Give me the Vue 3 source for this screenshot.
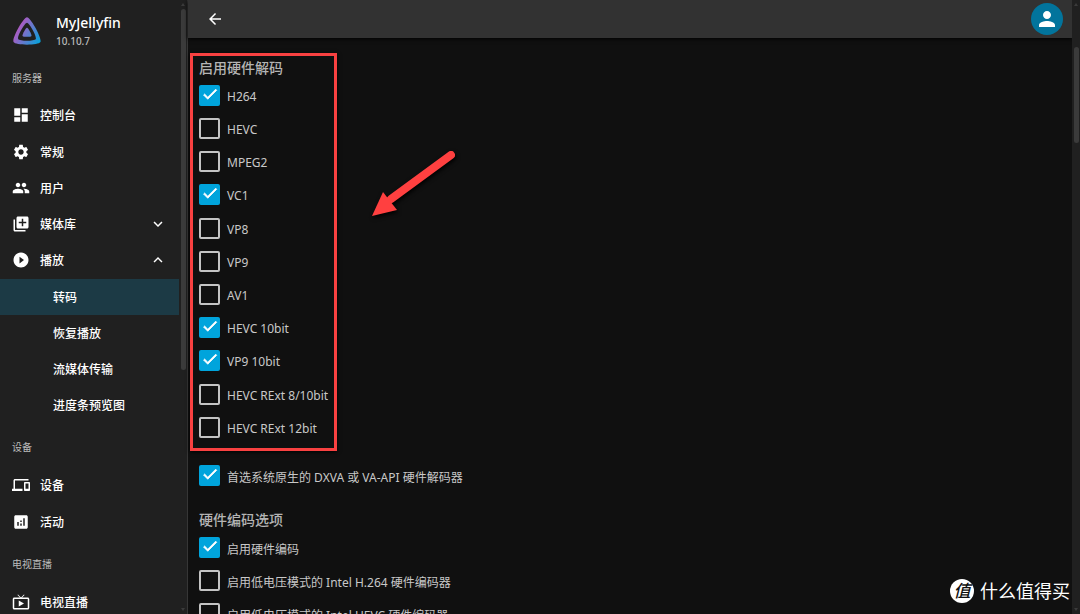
<script setup>
import { reactive } from 'vue'

const paths = {
  dashboard: 'M3 13h8V3H3v10zm0 8h8v-6H3v6zm10 0h8V11h-8v10zm0-18v6h8V3h-8z',
  settings:
    'M19.14 12.94c.04-.3.06-.61.06-.94 0-.32-.02-.64-.07-.94l2.03-1.58c.18-.14.23-.41.12-.61l-1.92-3.32c-.12-.22-.37-.29-.59-.22l-2.39.96c-.5-.38-1.03-.7-1.62-.94l-.36-2.54c-.04-.24-.24-.41-.48-.41h-3.84c-.24 0-.43.17-.47.41l-.36 2.54c-.59.24-1.13.57-1.62.94l-2.39-.96c-.22-.08-.47 0-.59.22L2.74 8.87c-.12.21-.08.47.12.61l2.03 1.58c-.05.3-.09.63-.09.94s.02.64.07.94l-2.03 1.58c-.18.14-.23.41-.12.61l1.92 3.32c.12.22.37.29.59.22l2.39-.96c.5.38 1.03.7 1.62.94l.36 2.54c.05.24.24.41.48.41h3.84c.24 0 .44-.17.47-.41l.36-2.54c.59-.24 1.13-.56 1.62-.94l2.39.96c.22.08.47 0 .59-.22l1.92-3.32c.12-.22.07-.47-.12-.61l-2.01-1.58zM12 15.6c-1.98 0-3.6-1.62-3.6-3.6s1.62-3.6 3.6-3.6 3.6 1.62 3.6 3.6-1.62 3.6-3.6 3.6z',
  people:
    'M16 11c1.66 0 2.99-1.34 2.99-3S17.66 5 16 5s-3 1.34-3 3 1.34 3 3 3zm-8 0c1.66 0 2.99-1.34 2.99-3S9.66 5 8 5 5 6.34 5 8s1.34 3 3 3zm0 2c-2.33 0-7 1.17-7 3.5V19h14v-2.5c0-2.33-4.67-3.5-7-3.5zm8 0c-.29 0-.62.02-.97.05 1.16.84 1.97 1.97 1.97 3.45V19h6v-2.5c0-2.33-4.67-3.5-7-3.5z',
  library:
    'M4 6H2v14c0 1.1.9 2 2 2h14v-2H4V6zm16-4H8c-1.1 0-2 .9-2 2v12c0 1.1.9 2 2 2h12c1.1 0 2-.9 2-2V4c0-1.1-.9-2-2-2zm-1 9h-4v4h-2v-4H9V9h4V5h2v4h4v2z',
  play: 'M12 2C6.48 2 2 6.48 2 12s4.48 10 10 10 10-4.48 10-10S17.52 2 12 2zm-2 14.5v-9l6 4.5-6 4.5z',
  devices:
    'M4 6h18V4H4c-1.1 0-2 .9-2 2v11H0v3h14v-3H4V6zm19 2h-6c-.55 0-1 .45-1 1v10c0 .55.45 1 1 1h6c.55 0 1-.45 1-1V9c0-.55-.45-1-1-1zm-1 9h-4v-7h4v7z',
  activity:
    'M19 3H5c-1.1 0-2 .9-2 2v14c0 1.1.9 2 2 2h14c1.1 0 2-.9 2-2V5c0-1.1-.9-2-2-2zM9 17H7v-5h2v5zm4 0h-2v-3h2v3zm0-5h-2v-2h2v2zm4 5h-2V7h2v10z',
  tv: 'M21 6h-7.59l3.29-3.29L16 2l-4 4-4-4-.7.71L10.59 6H3c-1.1 0-2 .89-2 2v12c0 1.1.9 2 2 2h18c1.1 0 2-.9 2-2V8c0-1.11-.9-2-2-2zm0 14H3V8h18v12zM9 10v8l7-4z',
}

const sections = [
  {
    title: '服务器',
    items: [
      { label: '控制台', icon: 'dashboard' },
      { label: '常规', icon: 'settings' },
      { label: '用户', icon: 'people' },
      { label: '媒体库', icon: 'library', expand: 'down' },
      {
        label: '播放',
        icon: 'play',
        expand: 'up',
        children: [
          { label: '转码', active: true },
          { label: '恢复播放' },
          { label: '流媒体传输' },
          { label: '进度条预览图' },
        ],
      },
    ],
  },
  {
    title: '设备',
    items: [
      { label: '设备', icon: 'devices' },
      { label: '活动', icon: 'activity' },
    ],
  },
  { title: '电视直播', items: [{ label: '电视直播', icon: 'tv' }] },
]

const groups = reactive([
  {
    title: '启用硬件解码',
    kind: 'marked',
    options: [
      { label: 'H264', on: true },
      { label: 'HEVC', on: false },
      { label: 'MPEG2', on: false },
      { label: 'VC1', on: true },
      { label: 'VP8', on: false },
      { label: 'VP9', on: false },
      { label: 'AV1', on: false },
      { label: 'HEVC 10bit', on: true },
      { label: 'VP9 10bit', on: true },
      { label: 'HEVC RExt 8/10bit', on: false },
      { label: 'HEVC RExt 12bit', on: false },
    ],
  },
  {
    title: '',
    kind: 'native',
    options: [{ label: '首选系统原生的 DXVA 或 VA-API 硬件解码器', on: true }],
  },
  {
    title: '硬件编码选项',
    kind: 'encode',
    options: [
      { label: '启用硬件编码', on: true },
      { label: '启用低电压模式的 Intel H.264 硬件编码器', on: false },
      { label: '启用低电压模式的 Intel HEVC 硬件编码器', on: false },
    ],
  },
])
</script>

<template>
  <div class="app">
    <aside class="sidebar">
      <div class="side-content">
        <div class="brand">
          <svg class="logo" viewBox="0 0 512 512" aria-hidden="true">
            <defs>
              <linearGradient id="jelly" x1="110" y1="213" x2="496" y2="436" gradientUnits="userSpaceOnUse">
                <stop offset="0" stop-color="#aa5cc3" />
                <stop offset="1" stop-color="#00a4dc" />
              </linearGradient>
            </defs>
            <path
              fill="url(#jelly)"
              d="M256 201.6c-20.4 0-86.2 119.3-76.2 139.4s142.5 19.9 152.4 0-55.7-139.4-76.2-139.4z"
            />
            <path
              fill="url(#jelly)"
              fill-rule="evenodd"
              d="M256 23.3c-61.6 0-259.8 359.4-229.6 420.1s429.3 60 459.2 0S317.6 23.3 256 23.3zm150.5 367.5c-19.6 39.3-281.1 39.8-300.9 0s110.1-275.3 150.4-275.3 170.1 235.9 150.5 275.3z"
            />
          </svg>
          <div>
            <div class="name">MyJellyfin</div>
            <div class="version">10.10.7</div>
          </div>
        </div>
        <nav>
          <section v-for="s in sections" :key="s.title" class="nav-section">
            <h2 class="nav-title">{{ s.title }}</h2>
            <template v-for="item in s.items" :key="item.label">
              <a class="nav-item" href="#">
                <svg class="nav-icon" viewBox="0 0 24 24" aria-hidden="true"><path :d="paths[item.icon]" /></svg>
                <span class="nav-label">{{ item.label }}</span>
                <svg v-if="item.expand" class="chevron" viewBox="0 0 24 24" aria-hidden="true">
                  <path v-if="item.expand === 'down'" d="M16.59 8.59 12 13.17 7.41 8.59 6 10l6 6 6-6z" />
                  <path v-else d="m12 8-6 6 1.41 1.41L12 10.83l4.59 4.58L18 14z" />
                </svg>
              </a>
              <a
                v-for="c in item.children"
                :key="c.label"
                class="nav-item child"
                :class="{ active: c.active }"
                href="#"
              >{{ c.label }}</a>
            </template>
          </section>
        </nav>
      </div>
      <div class="scrollbar side-bar" aria-hidden="true">
        <i class="arrow up"></i>
        <div class="rail"><div class="thumb"></div></div>
        <i class="arrow down"></i>
      </div>
    </aside>

    <div class="page">
      <header class="topbar">
        <button class="icon-button" type="button" aria-label="返回">
          <svg viewBox="0 0 24 24"><path d="M20 11H7.83l5.59-5.59L12 4l-8 8 8 8 1.41-1.41L7.83 13H20v-2z" /></svg>
        </button>
        <button class="avatar" type="button" aria-label="用户">
          <svg viewBox="0 0 24 24">
            <path d="M12 12c2.21 0 4-1.79 4-4s-1.79-4-4-4-4 1.79-4 4 1.79 4 4 4zm0 2c-2.67 0-8 1.34-8 4v2h16v-2c0-2.66-5.33-4-8-4z" />
          </svg>
        </button>
      </header>
      <main class="content">
        <section v-for="g in groups" :key="g.kind" class="group" :class="g.kind">
          <h3 v-if="g.title" class="group-title">{{ g.title }}</h3>
          <label v-for="o in g.options" :key="o.label" class="option">
            <span class="box">
              <input v-model="o.on" type="checkbox" />
              <svg v-if="o.on" viewBox="0 0 24 24" aria-hidden="true">
                <path d="M9 16.17 4.83 12l-1.42 1.41L9 19 21 7l-1.41-1.41z" />
              </svg>
            </span>
            <span class="option-label">{{ o.label }}</span>
          </label>
        </section>
      </main>
    </div>

    <div class="scrollbar page-bar" aria-hidden="true">
      <i class="arrow up"></i>
      <div class="rail"><div class="thumb"></div></div>
      <i class="arrow down"></i>
    </div>

    <svg class="pointer" viewBox="0 0 100 80" aria-hidden="true">
      <path d="M83 15 23 59" stroke="#ff4040" stroke-width="8" stroke-linecap="round" />
      <path d="M4 76 15 52 29 70z" fill="#ff4040" />
    </svg>

    <div class="watermark">
      <span class="seal">值</span>
      <span>什么值得买</span>
    </div>
  </div>
</template>

<style>
body {
  background: #101010;
}
</style>

<style scoped>
.app {
  position: relative;
  display: flex;
  height: 100vh;
  overflow: hidden;
  background: #101010;
  color: #fff;
  font-family: 'Noto Sans', 'Noto Sans CJK SC', sans-serif;
  font-size: 12px;
}
.app * {
  box-sizing: border-box;
}
.sidebar {
  flex: none;
  display: flex;
  width: 188px;
  background: #202020;
  border-right: 1px solid #363636;
  overflow: hidden;
}
.side-content {
  flex: 1;
}
.brand {
  display: flex;
  align-items: center;
  gap: 14px;
  height: 60px;
  padding: 2px 0 0 12px;
}
.logo {
  width: 30px;
  height: 32px;
}
.name {
  font-size: 14px;
  font-weight: 500;
  line-height: 20px;
}
.version {
  font-size: 10px;
  font-weight: 500;
  line-height: 16px;
  color: #bcbcbc;
}
.nav-section {
  padding-bottom: 6px;
}
.nav-title {
  margin: 0;
  padding: 0 0 1px 12px;
  font-size: 10px;
  font-weight: 400;
  line-height: 36px;
  color: #bcbcbc;
}
.nav-section + .nav-section .nav-title {
  line-height: 37px;
}
.nav-item {
  display: flex;
  align-items: center;
  height: 36px;
  padding: 0 12px;
  color: #fff;
  font-weight: 500;
  text-decoration: none;
}
.nav-item:nth-of-type(4n + 2) {
  margin-top: 1px;
}
.nav-icon {
  width: 18px;
  height: 18px;
  margin-right: 10px;
  fill: #fff;
}
.nav-label {
  flex: 1;
}
.chevron {
  width: 18px;
  height: 18px;
  fill: #fff;
}
.child {
  padding-left: 53px;
}
.active {
  background: #1c3a45;
}
.scrollbar {
  flex: none;
  display: flex;
  flex-direction: column;
  align-items: center;
  width: 8px;
  padding: 3px 0;
  background: #202020;
}
.rail {
  flex: 1;
  display: flex;
  width: 5px;
}
.thumb {
  width: 5px;
  border-radius: 3px;
  background: #3b3b3b;
}
.side-bar .thumb {
  height: 60%;
  margin-top: 3px;
}
.page-bar .thumb {
  height: 16%;
  margin-top: 41px;
}
.arrow {
  border: 2px solid transparent;
}
.arrow.up {
  border-top: 0;
  border-bottom: 3px solid #3b3b3b;
}
.arrow.down {
  border-bottom: 0;
  border-top: 3px solid #3b3b3b;
}
.page {
  flex: 1;
  min-width: 0;
}
.topbar {
  display: flex;
  align-items: center;
  justify-content: space-between;
  height: 38px;
  padding: 0 9px 0 18px;
  background: #323232;
  box-shadow: 0 1px 4px #000;
}
button {
  display: grid;
  place-items: center;
  padding: 0;
  border: 0;
  background: none;
}
button svg {
  fill: #fff;
}
.icon-button svg {
  width: 18px;
  height: 18px;
}
.avatar {
  width: 32px;
  height: 32px;
  border-radius: 50%;
  background: #02749c;
}
.avatar svg {
  width: 24px;
  height: 24px;
}
.content {
  padding: 15px 0 0 11px;
  color: #c8c8c8;
}
.group {
  width: fit-content;
}
.marked {
  margin-left: -9px;
  padding: 0 6px 4px;
  border: 3px solid #f94141;
  box-shadow: 0 1px 4px #000;
}
.native {
  margin-top: 8px;
}
.encode {
  margin-top: 16px;
}
.group-title {
  margin: 0;
  font-size: 14px;
  font-weight: 500;
  line-height: 23px;
  color: #b4b4b4;
}
.option {
  display: flex;
  align-items: center;
  gap: 7px;
  height: 33px;
  font-weight: 400;
  white-space: nowrap;
}
.option:nth-of-type(5n) {
  height: 34px;
}
.option-label {
  padding-top: 2px;
}
.box {
  display: grid;
  width: 21px;
  height: 21px;
}
.box > * {
  grid-area: 1 / 1;
}
input {
  appearance: none;
  width: 21px;
  height: 21px;
  margin: 0;
  border: 2px solid #c4c4c4;
  border-radius: 2px;
}
input:checked {
  border: 0;
  background: #00a4dc;
}
.box svg {
  justify-self: center;
  width: 18px;
  height: 18px;
  fill: #fff;
  stroke: #fff;
  pointer-events: none;
}
.pointer {
  position: absolute;
  left: 368px;
  top: 140px;
  width: 100px;
  height: 80px;
  filter: drop-shadow(1px 2px 2px #000);
}
.watermark {
  position: absolute;
  right: 10px;
  bottom: 10px;
  display: flex;
  align-items: center;
  gap: 6px;
  font-size: 18px;
  line-height: 26px;
}
.seal {
  width: 24px;
  height: 24px;
  border-radius: 50%;
  background: #fff;
  color: #101010;
  font-size: 17px;
  font-style: italic;
  font-weight: 500;
  line-height: 24px;
  text-align: center;
}
</style>
